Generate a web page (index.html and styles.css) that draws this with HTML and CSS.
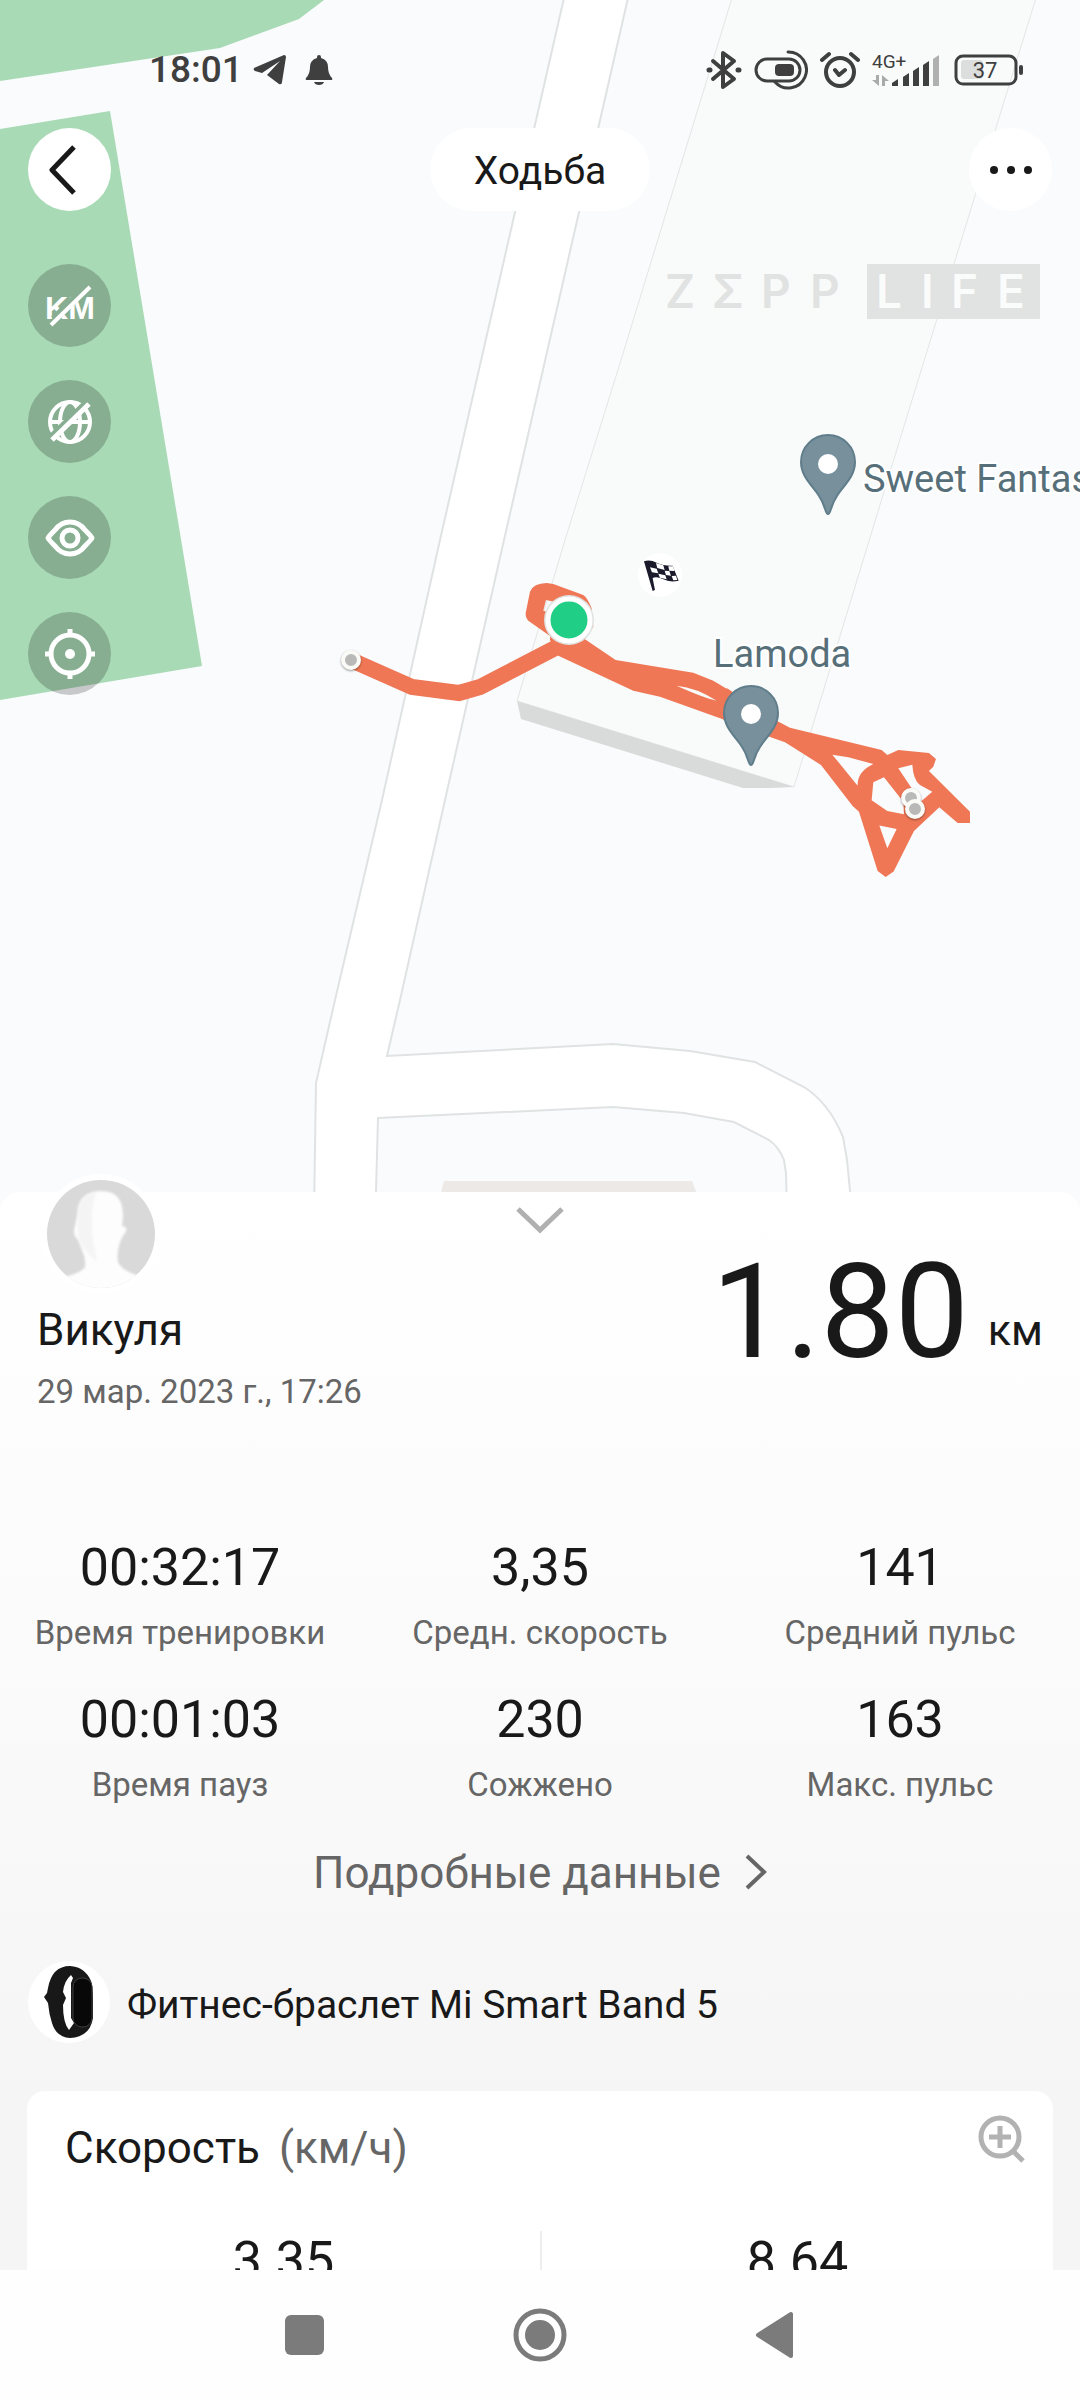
FILE: index.html
```html
<!DOCTYPE html>
<html lang="ru">
<head>
  <meta charset="UTF-8">
  <meta name="viewport" content="width=device-width, initial-scale=1.0">
  <title>Ходьба</title>
  <link rel="stylesheet" href="styles.css">
</head>
<body>

<main class="screen">
  <section class="map-section">
    <!-- Map -->
    <svg class="map" viewBox="0 0 1080 1212" role="img" aria-label="Карта маршрута">
      <rect width="1080" height="1212" fill="#f9fbfc"/>
      <path fill="#a9dab6" d="M0 0H324L299 19 220 48 0 81Z"/>
      <path fill="#a9dab6" d="M0 129 110 111 202 666 0 700Z"/>

      <!-- Roads -->
      <path class="road" d="M564 -2 440 540 382 800 335 1000 316 1083 314 1214H376V1191L378 1118 613 1107 684 1113 734 1122 769 1140Q779 1147 784 1160L786 1173 787 1214H850V1191L847 1160 843 1137Q829 1103 804 1087L755 1062 690 1051 613 1044 387 1056 400 1000 445 800 504 540 628 -2Z"/>
      <path fill="#ece9e6" d="M444 1181H692L704 1212H436Z"/>

      <!-- Building -->
      <path class="building" d="M732 -2 621 360 565 540 517 701 794 787 912 400 1036 -2Z"/>
      <path fill="#d9dada" d="M517 701 521 719 743 788H770L794 787Z"/>

      <!-- Finish flag -->
      <circle cx="660" cy="575" r="22" fill="#fff"/>
      <g transform="translate(330 540) scale(.3333)">
        <path fill="#1b1a2b" d="M942 64Q960 58 980 68T1028 77L1046 122Q1020 128 1000 118T968 114L975 150 968 153Z"/>
        <path fill="#fff" d="M978 69 1000 76 1004 90 982 84ZM1015 79 1029 79 1034 93 1018 92ZM960 82 980 86 985 100 966 97ZM1004 92 1018 93 1023 107 1008 105ZM985 101 1006 106 1010 118 990 113ZM1025 108 1038 107 1042 120 1030 121Z"/>
      </g>

      <!-- Route -->
      <path class="track" d="M351 660 412 687 459 693 480 687 557 647 566 641"/>
      <g fill="#ef7755" fill-rule="evenodd">
        <path transform="translate(330 540) scale(.3333)" d="M600 155Q610 130 650 129L670 132 760 165Q772 172 785 205L790 260 765 298 857 360 1090 398 1150 422 1200 452 1200 546 1185 540 990 470 910 452 685 347 660 300 660 288 595 242Q587 235 587 220ZM648 180 640 212 660 218 675 186ZM1040 437Q1100 443 1160 482 1120 473 1040 437Z"/>
        <path transform="translate(680 400) scale(.3333)" d="M140 864 290 962 330 983 605 1050 622 1065 655 1050 747 1059 768 1077 760 1100 747 1113 870 1235V1269H833L778 1222 702 1293 641 1415 617 1431 593 1413 537 1235 518 1218 423 1095 315 1027 268 1010 130 960ZM457 1064 533 1157Q531 1115 580 1092L505 1072ZM580 1147 575 1201 622 1233 672 1243 670 1205 612 1132ZM655 1105 722 1205 757 1175 720 1155Q700 1140 697 1094ZM598 1277 622 1345 650 1287Z"/>
      </g>
      <g class="stop">
        <circle cx="351" cy="660" r="8"/>
        <circle cx="911" cy="798" r="8"/>
        <circle cx="915" cy="809" r="8"/>
      </g>
      <circle cx="569" cy="620" r="25" fill="#dfe2e1"/>
      <circle cx="569" cy="620" r="21" fill="#20ce86" stroke="#fff" stroke-width="5"/>

      <!-- Places -->
      <g class="pin">
        <path d="M828 514C825 514 826 506 819 496 813 486 801 477 801 462A27 27 0 0 1 855 462C855 477 843 486 837 496 830 506 831 514 828 514Z"/>
        <circle cx="828" cy="464" r="10"/>
        <path d="M751 765C748 765 749 757 742 747 736 737 724 728 724 713A27 27 0 0 1 778 713C778 728 766 737 760 747 753 757 754 765 751 765Z"/>
        <circle cx="751" cy="714" r="10"/>
      </g>
      <g class="place">
        <text x="863" y="492">Sweet Fantas</text>
        <text x="713" y="667">Lamoda</text>
      </g>
    </svg>

    <div class="overlay">
      <!-- Status bar -->
      <div class="status-bar">
        <div class="status-left">
          <span class="clock">18:01</span>
          <svg width="34" height="30" viewBox="0 0 34 30" fill="#3f3f3f"><path d="M1 13Q0 15 2 16L9 18 27 6 14 20 26 29Q29 30 29 27L33 2Q33 0 31 0Z"/></svg>
          <svg width="36" height="30" viewBox="-8 0 36 30" fill="#3f3f3f"><path d="M12 2Q12 0 14 0T16 2V3Q23 5 23 12 23 19 27 23 28 25 26 25H2Q0 25 1 23 5 19 5 12 5 5 12 3ZM9 27H19Q18 30 14 30T9 27Z"/></svg>
        </div>
        <div class="status-right">
          <svg width="36" height="40" viewBox="0 0 36 40" fill="none" stroke="#3f3f3f" stroke-width="4" stroke-linejoin="round" stroke-linecap="round"><path d="M7 11 28 29 17 37V3L28 11 7 29"/><path d="M3 20h1M32 20h1" stroke-width="5"/></svg>
          <svg width="54" height="40" viewBox="0 0 54 40" fill="none" stroke="#3f3f3f" stroke-width="3"><rect x="2" y="9" width="44" height="22" rx="11"/><rect x="21" y="14" width="19" height="12" rx="4" fill="#3f3f3f" stroke="none"/><path d="M34 2A18 18 0 1 1 21 32" stroke-linecap="round"/></svg>
          <svg width="40" height="38" viewBox="0 0 40 38" fill="none" stroke="#3f3f3f" stroke-width="4" stroke-linecap="round" stroke-linejoin="round"><circle cx="20" cy="21" r="14"/><path d="M15 19 19 24 25 19M2 9 9 3M38 9 31 3"/></svg>
          <svg width="70" height="36" viewBox="0 0 70 36"><text class="network" x="0" y="16">4G+</text><path fill="#aaa" d="M7 23V34L0 28H4V23ZM10 34V23L17 29H13V34Z"/><path fill="#3f3f3f" d="M20 34V31L26 27V34ZM31 34V25L37 21V34ZM41 34V19L47 15V34ZM51 34V13L57 9V34Z"/><path fill="#b0b0b0" d="M61 34V7L67 3V34Z"/></svg>
          <svg width="70" height="32" viewBox="0 0 70 32"><rect x="2" y="2" width="60" height="28" rx="7" fill="none" stroke="#3f3f3f" stroke-width="3"/><rect x="7" y="6" width="22" height="19" rx="3" fill="#dcdddd"/><text class="battery" x="31" y="24">37</text><rect x="65" y="11" width="4" height="10" rx="2" fill="#3f3f3f"/></svg>
        </div>
      </div>

      <header class="top-bar">
        <button class="round-button" aria-label="Назад">
          <svg width="42" height="50" viewBox="0 0 42 50" fill="none" stroke="#191919" stroke-width="5"><path d="M25 2 3 25 25 48" stroke-linejoin="round"/></svg>
        </button>
        <h1 class="title">Ходьба</h1>
        <button class="round-button" aria-label="Ещё">
          <svg width="42" height="8" viewBox="0 0 42 8" fill="#191919"><circle cx="4" cy="4" r="4"/><circle cx="21" cy="4" r="4"/><circle cx="38" cy="4" r="4"/></svg>
        </button>
      </header>

      <div class="map-tools">
        <div class="tool-list">
          <button class="tool-button" aria-label="Километры">
            <svg width="50" height="50" viewBox="0 0 50 50"><text class="km" x="25" y="38">KM</text><path d="M9 38 42 6" stroke="#87ae92" stroke-width="8"/><path d="M6 44 45 6" stroke="#fff" stroke-width="4"/></svg>
          </button>
          <button class="tool-button" aria-label="Слой карты">
            <svg width="50" height="50" viewBox="0 0 50 50" fill="none" stroke="#fff" stroke-width="4"><circle cx="25" cy="25" r="20"/><ellipse cx="25" cy="25" rx="10" ry="20"/><path d="M5 25H45"/><path d="M6 39 40 6" stroke="#87ae92" stroke-width="5"/><path d="M7 43 44 7" stroke-width="5"/></svg>
          </button>
          <button class="tool-button" aria-label="Показать маршрут">
            <svg width="50" height="50" viewBox="0 0 50 50" fill="none" stroke="#fff" stroke-width="5" stroke-linejoin="round"><path d="M3 25Q4 23 10 17 16 9 25 9T40 17Q46 23 47 25 46 27 40 33 34 41 25 41T10 33Q4 27 3 25Z"/><circle cx="25" cy="25" r="8"/></svg>
          </button>
          <button class="tool-button" aria-label="Центрировать">
            <svg width="50" height="50" viewBox="0 0 50 50" fill="none" stroke="#fff" stroke-width="5"><circle cx="25" cy="25" r="19"/><path d="M25 0V6M25 44V50M0 25H6M44 25H50"/><circle cx="25" cy="25" r="5" fill="#fff" stroke="none"/></svg>
          </button>
        </div>
        <svg class="brand" width="376" height="55" viewBox="0 0 376 55" role="img" aria-label="Zepp Life">
          <text x="1 48 97 146" y="44">ZΣPP</text>
          <rect x="203" width="173" height="55"/>
          <text class="brand-life" x="212 257 287 333" y="44">LIFE</text>
        </svg>
      </div>
    </div>
  </section>

  <section class="sheet">
    <div class="summary">
      <div class="profile">
        <svg class="avatar" width="120" height="120" viewBox="0 0 120 120">
          <defs>
            <clipPath id="face"><circle cx="60" cy="60" r="54"/></clipPath>
            <filter id="soft"><feGaussianBlur stdDeviation="1"/></filter>
          </defs>
          <circle cx="60" cy="60" r="60" fill="#fff"/>
          <g clip-path="url(#face)">
            <rect width="120" height="120" fill="#d9d9d9"/>
            <path filter="url(#soft)" fill="#fdfdfd" d="M36 42Q36 18 59 17T82 42L81 52Q88 53 84 59 80 64 78 72 76 78 77 88 80 97 104 104V124H14V105Q40 100 44 93 45 84 41 76L37 66Q31 61 34 52Z"/>
            <path filter="url(#soft)" fill="#ececec" d="M37 40Q37 22 55 18 48 42 52 66L56 88Q40 74 37 62Z" opacity=".5"/>
          </g>
        </svg>
        <div class="name">Викуля</div>
        <div class="date">29 мар. 2023 г., 17:26</div>
      </div>
      <button class="collapse" aria-label="Свернуть">
        <svg width="48" height="28" viewBox="0 0 48 28" fill="none" stroke="#b0b0b0" stroke-width="5"><path d="M2 3 24 24 46 3"/></svg>
      </button>
      <div class="distance"><span class="distance-value">1.80</span><span class="distance-unit">км</span></div>
    </div>

    <dl class="stats">
      <div><dd>00:32:17</dd><dt>Время тренировки</dt></div>
      <div><dd>3,35</dd><dt>Средн. скорость</dt></div>
      <div><dd>141</dd><dt>Средний пульс</dt></div>
      <div><dd>00:01:03</dd><dt>Время пауз</dt></div>
      <div><dd>230</dd><dt>Сожжено</dt></div>
      <div><dd>163</dd><dt>Макс. пульс</dt></div>
    </dl>

    <a class="details" href="#details">Подробные данные
      <svg width="22" height="38" viewBox="0 0 22 38" fill="none" stroke="#666" stroke-width="4"><path d="M2 2 19 18 2 34"/></svg>
    </a>

    <div class="device">
      <svg class="device-icon" width="83" height="83" viewBox="0 0 83 83">
        <circle cx="41" cy="41" r="41" fill="#fff"/>
        <path fill="#181818" fill-rule="evenodd" d="M20 27Q24 5 42 5 57 6 63 20 65 24 65 40V57Q62 76 42 77 28 76 24 62 21 53 20 42L16 36 19 32ZM43 14Q36 20 35 31L38 37 35 44Q35 62 41 69L46 62 43 57V22L45 17Z"/>
        <rect x="45" y="17" width="19" height="49" rx="9" fill="#080808" stroke="#3c3c3c"/>
      </svg>
      <span>Фитнес-браслет Mi Smart Band 5</span>
    </div>

    <article class="card">
      <div class="card-header">
        <h2>Скорость <span>(км/ч)</span></h2>
        <button class="zoom-button" aria-label="Увеличить">
          <svg width="48" height="48" viewBox="0 0 48 48" fill="none" stroke="#b2b2b2" stroke-width="5"><circle cx="22" cy="22" r="19"/><path d="M22 11V33M11 22H33M35 36 45 46"/></svg>
        </button>
      </div>
      <div class="card-values">
        <div>3.35</div>
        <div>8.64</div>
      </div>
    </article>
  </section>
</main>

<nav class="nav-bar">
  <button aria-label="Недавние">
    <svg width="54" height="54" viewBox="0 0 54 54" fill="#7b7b7b"><rect x="7" y="7" width="39" height="40" rx="6"/></svg>
  </button>
  <button aria-label="Домой">
    <svg width="54" height="54" viewBox="0 0 54 54"><circle cx="27" cy="27" r="24" fill="none" stroke="#7b7b7b" stroke-width="5"/><circle cx="27" cy="27" r="15" fill="#7b7b7b"/></svg>
  </button>
  <button aria-label="Назад">
    <svg width="54" height="54" viewBox="0 0 54 54" fill="#7b7b7b" stroke="#7b7b7b" stroke-width="4" stroke-linejoin="round"><path d="M10 27 43 6V48Z"/></svg>
  </button>
</nav>

</body>
</html>
```

FILE: styles.css
```css
* {
  box-sizing: border-box;
}
body {
  margin: 0;
  height: 100vh;
  display: flex;
  flex-direction: column;
  font-family: Roboto, "Noto Sans", sans-serif;
  color: #191919;
  background-color: #fefefe;
}
button {
  display: flex;
  align-items: center;
  justify-content: center;
  padding: 0;
  border: none;
  background: none;
  cursor: pointer;
}
svg {
  display: block;
  flex-shrink: 0;
}
.screen {
  flex: 1;
  min-height: 0;
  overflow-y: auto;
  scrollbar-width: none;
}

/* Map */
.map-section {
  display: grid;
}
.map, .overlay {
  grid-area: 1 / 1;
}
.map {
  width: 100%;
  height: auto;
}
.road {
  fill: #fff;
  stroke: #e0e3e3;
  stroke-width: 2;
}
.building {
  fill: #f9fbfa;
  stroke: #e4e6e6;
  stroke-width: 1;
}
.track {
  fill: none;
  stroke: #ef7755;
  stroke-width: 16;
}
.stop {
  fill: #b9bab8;
  stroke: #fafaf6;
  stroke-width: 4;
  filter: drop-shadow(0 1px 1px rgba(0, 0, 0, 0.4));
}
.pin path {
  fill: #78909c;
  stroke: #607d8b;
  stroke-width: 2;
}
.pin circle {
  fill: #fff;
}
.place {
  font-size: 38px;
  fill: #566f79;
  stroke: #fff;
  stroke-width: 4;
  paint-order: stroke;
}
.overlay {
  display: flex;
  flex-direction: column;
}

/* Status bar */
.status-bar {
  display: flex;
  justify-content: space-between;
  height: 128px;
  padding: 50px 56px 0 149px;
}
.status-left, .status-right {
  display: flex;
  align-items: center;
  height: 40px;
}
.status-left {
  gap: 10px;
}
.status-right {
  gap: 12px;
}
.clock {
  font-size: 37px;
  line-height: 40px;
  font-weight: 500;
  color: #3f3f3f;
}
.network {
  font-size: 19px;
  fill: #3f3f3f;
}
.battery {
  font-size: 22px;
  text-anchor: middle;
  fill: #3f3f3f;
}

/* Top bar */
.top-bar {
  display: flex;
  justify-content: space-between;
  padding: 0 28px;
}
.round-button {
  width: 83px;
  height: 83px;
  border-radius: 50%;
  background-color: #fff;
}
.title {
  margin: 0;
  padding: 3px 44px 0;
  border-radius: 42px;
  background-color: #fff;
  font-size: 39px;
  line-height: 80px;
  font-weight: 400;
}
.map-tools {
  display: flex;
  justify-content: space-between;
  align-items: flex-start;
  padding: 53px 40px 0 28px;
}
.tool-list {
  display: flex;
  flex-direction: column;
  gap: 33px;
}
.tool-button {
  width: 83px;
  height: 83px;
  border-radius: 50%;
  background-color: rgba(0, 0, 0, 0.2);
}
.km {
  font-size: 32px;
  font-weight: 700;
  text-anchor: middle;
  fill: #fff;
}
.brand {
  font-family: Inter, sans-serif;
  font-size: 46px;
  font-weight: 600;
  fill: #e1e2e2;
}
.brand-life {
  fill: #fafbfb;
}

/* Sheet */
.sheet {
  position: relative;
  margin-top: -20px;
  border-radius: 20px 20px 0 0;
  background: linear-gradient(#fff 0, #fcfcfc 330px, #f8f8f8 700px, #f5f5f5 900px);
}
.summary {
  display: grid;
  grid-template-columns: 1fr auto 1fr;
  align-items: start;
  padding: 0 37px;
}
.avatar {
  margin: -18px 0 10px 4px;
}
.name {
  font-size: 44px;
  line-height: 52px;
}
.date {
  margin-top: 16px;
  font-size: 33px;
  line-height: 40px;
  color: #666;
}
.collapse {
  padding-top: 14px;
}
.distance {
  display: flex;
  justify-content: flex-end;
  align-items: flex-end;
  gap: 19px;
  padding-top: 54px;
}
.distance-value {
  font-size: 132px;
  line-height: 132px;
}
.distance-unit {
  margin-bottom: 22px;
  font-size: 43px;
  line-height: 52px;
}
.stats {
  display: grid;
  grid-template-columns: repeat(3, 1fr);
  row-gap: 37px;
  margin: 126px 0 0;
  text-align: center;
}
.stats div {
  display: flex;
  flex-direction: column;
  gap: 15px;
}
.stats dd {
  margin: 0;
  font-size: 52px;
  line-height: 60px;
}
.stats dt {
  font-size: 33px;
  line-height: 40px;
  color: #666;
}
.details {
  display: flex;
  justify-content: center;
  align-items: center;
  gap: 24px;
  margin-top: 42px;
  font-size: 44px;
  line-height: 52px;
  color: #666;
  text-decoration: none;
}
.device {
  display: flex;
  align-items: center;
  gap: 16px;
  margin-top: 62px;
  padding: 0 28px;
  font-size: 39px;
}
.device span {
  padding-top: 4px;
}
.card {
  margin: 47px 27px 0;
  border-radius: 18px;
  background-color: #fff;
}
.card-header {
  display: flex;
  justify-content: space-between;
  align-items: flex-start;
  padding: 24px 27px 0 38px;
}
.card-header h2 {
  margin: 7px 0 0;
  font-size: 44px;
  line-height: 52px;
  font-weight: 400;
}
.card-header span {
  margin-left: 8px;
  color: #666;
}
.card-values {
  display: grid;
  grid-template-columns: 1fr 1fr;
  margin-top: 57px;
  padding-bottom: 40px;
  font-size: 52px;
  line-height: 60px;
  text-align: center;
}
.card-values div + div {
  border-left: 2px solid #eee;
}

/* Navigation bar */
.nav-bar {
  display: flex;
  justify-content: center;
  align-items: center;
  gap: 181px;
  height: 130px;
  background-color: #fefefe;
}
```
